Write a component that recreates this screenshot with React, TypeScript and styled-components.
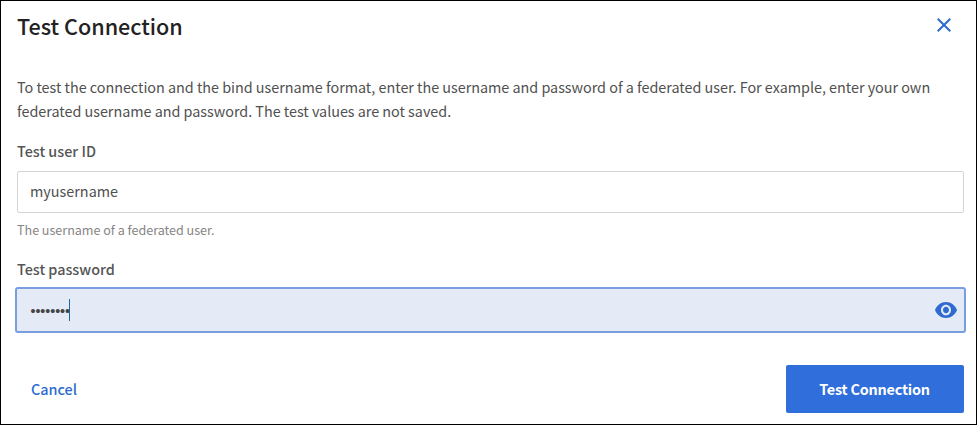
import React from "react";
import styled, { createGlobalStyle } from "styled-components";

const GlobalStyle = createGlobalStyle`
  * { box-sizing: border-box; }
  body {
    margin: 0;
    background: #fff;
    font-family: "Source Sans Pro", "Noto Sans CJK SC", "Noto Sans", sans-serif;
    color: #505050;
  }
`;

const Dialog = styled.section`
  display: flex;
  flex-direction: column;
  width: 977px;
  height: 425px;
  padding: 10px 12px 11px 16px;
  border: 1px solid #000;
  background: #fff;
`;

const Header = styled.header`
  display: flex;
  justify-content: space-between;
  align-items: flex-start;
  height: 64px;
`;

const Title = styled.h1`
  margin: 0;
  font-size: 21.6px;
  font-weight: 500;
  line-height: 30px;
  letter-spacing: -0.01px;
  color: #222;
`;

const CloseButton = styled.button`
  display: flex;
  margin: 7px 13px 0 0;
  padding: 0;
  border: 0;
  background: none;
  color: #2e6bd0;
`;

const Description = styled.p`
  margin: 0;
  font-size: 14.4px;
  line-height: 24px;
  letter-spacing: -0.028px;
  white-space: nowrap;
`;

const Label = styled.label`
  height: 24px;
  margin-top: 16px;
  font-size: 14.4px;
  font-weight: 500;
  line-height: 24px;
  color: #555;
`;

const Field = styled.div<{ $focused?: boolean }>`
  display: flex;
  align-items: center;
  flex: none;
  height: ${(p) => (p.$focused ? 46 : 42)}px;
  margin: ${(p) => (p.$focused ? "6px -2px 0" : "8px 0 0")};
  padding: ${(p) => (p.$focused ? "0 7px 0 13px" : "0 12px 2px")};
  border: ${(p) => (p.$focused ? "2px solid #789ee0" : "1px solid #d4d4d4")};
  border-radius: ${(p) => (p.$focused ? 3 : 2)}px;
  background: ${(p) => (p.$focused ? "#e4eaf6" : "#fff")};
  font-size: 14.4px;
  line-height: 24px;
`;

const Hint = styled.div`
  height: 20px;
  margin-top: 7px;
  margin-bottom: 1px;
  font-size: 12.6px;
  line-height: 20px;
  letter-spacing: -0.03px;
  color: #858585;
`;

const Mask = styled.span`
  margin-left: -1px;
  padding-top: 1px;
  font-family: "DejaVu Sans", sans-serif;
  font-size: 13.5px;
  letter-spacing: -3.03px;
  color: #444;
`;

const Caret = styled.span`
  width: 1px;
  height: 22px;
  margin-left: 1px;
  background: #146c9c;
`;

const EyeButton = styled(CloseButton)`
  margin: 0 0 0 auto;
`;

const Footer = styled.footer`
  display: flex;
  justify-content: space-between;
  align-items: center;
  margin-top: auto;
`;

const Button = styled.button<{ $primary?: boolean }>`
  width: ${(p) => (p.$primary ? "178px" : "auto")};
  height: 48px;
  padding: ${(p) => (p.$primary ? "0 1px 2px 0" : "0 14px 1px")};
  border: 0;
  border-radius: 2px;
  background: ${(p) => (p.$primary ? "#2f6edb" : "none")};
  color: ${(p) => (p.$primary ? "#fff" : "#2e6bd0")};
  font-family: inherit;
  font-size: 14.4px;
  font-weight: ${(p) => (p.$primary ? 700 : 500)};
  letter-spacing: ${(p) => (p.$primary ? "-0.2px" : 0)};
`;

export default function App() {
  return (
    <>
      <GlobalStyle />
      <Dialog>
        <Header>
          <Title>Test Connection</Title>
          <CloseButton aria-label="Close">
            <svg width="14" height="14" viewBox="0 0 14 14" fill="none" stroke="currentColor" strokeWidth="2">
              <path d="M.7.7l12.6 12.6M13.3.7L.7 13.3" />
            </svg>
          </CloseButton>
        </Header>
        <Description>
          To test the connection and the bind username format, enter the username and password of a federated user. For example, enter your own
          <br />
          federated username and password. The test values are not saved.
        </Description>
        <Label>Test user ID</Label>
        <Field>myusername</Field>
        <Hint>The username of a federated user.</Hint>
        <Label>Test password</Label>
        <Field $focused>
          <Mask>••••••••</Mask>
          <Caret />
          <EyeButton aria-label="Show password">
            <svg width="22" height="16" viewBox="1 4.5 22 15" preserveAspectRatio="none" fill="currentColor">
              <path d="M12 4.5C7 4.5 2.73 7.61 1 12c1.73 4.39 6 7.5 11 7.5s9.27-3.11 11-7.5c-1.73-4.39-6-7.5-11-7.5zM12 17c-2.76 0-5-2.24-5-5s2.24-5 5-5 5 2.24 5 5-2.24 5-5 5zm0-8c-1.66 0-3 1.34-3 3s1.34 3 3 3 3-1.34 3-3-1.34-3-3-3z" />
            </svg>
          </EyeButton>
        </Field>
        <Footer>
          <Button>Cancel</Button>
          <Button $primary>Test Connection</Button>
        </Footer>
      </Dialog>
    </>
  );
}
